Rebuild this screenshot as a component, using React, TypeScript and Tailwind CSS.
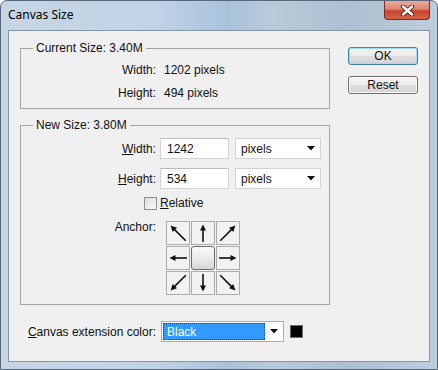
import React from 'react';

const FONT = "font-['Liberation_Sans',Arial,sans-serif]";

function Arrow({ angle }: { angle: number }) {
  const diag = angle % 90 !== 0;
  const tail = diag ? 22 : 20;
  const tip = diag ? 0.5 : 2.5;
  const base = tip + 6;
  return (
    <svg width="22" height="22" viewBox="0 0 22 22">
      <g transform={`rotate(${angle} 11 11)`}>
        <line x1="11" y1={tail} x2="11" y2={base - 1} stroke="#111" strokeWidth="1.6" />
        <polygon points={`11,${tip} 8,${base} 14,${base}`} fill="#111" />
      </g>
    </svg>
  );
}

function AnchorGrid() {
  const angles: (number | null)[] = [-45, 0, 45, -90, null, 90, -135, 180, 135];
  return (
    <div className="grid grid-cols-[24px_24px_24px] grid-rows-[24px_24px_24px] gap-[1px]">
      {angles.map((a, i) =>
        a === null ? (
          <div
            key={i}
            className="rounded-[3px] border border-[#6b6b6b] bg-[linear-gradient(to_bottom,#fbfbfb,#e9e9e9_55%,#d6d6d6)]"
          />
        ) : (
          <div key={i} className="flex items-center justify-center border border-[#ababab] bg-[#f2f2f2]">
            <Arrow angle={a} />
          </div>
        ),
      )}
    </div>
  );
}

function DropArrow() {
  return (
    <svg width="8" height="5" viewBox="0 0 8 5">
      <polygon points="0,0 8,0 4,4.5" fill="#111" />
    </svg>
  );
}

function UnitSelect() {
  return (
    <div className="ml-[6px] flex h-[21px] w-[86px] items-center justify-between border border-[#d3d3d3] bg-white pl-[5px] pr-[5px]">
      <span>pixels</span>
      <DropArrow />
    </div>
  );
}

export default function App() {
  return (
    <div className={`h-[370px] w-[438px] bg-white text-[12px] leading-[16px] text-[#111] ${FONT}`}>
      <div className="flex h-full w-full flex-col rounded-t-[7px] border border-[#56687b] bg-[linear-gradient(to_right,#c7d5e3,#c2d3e6_35%,#a9c2dc_52%,#b9cadb_62%,#aebfd1_80%,#bdcddd)] px-[7px] pb-[7px]">
        {/* title bar */}
        <div className="flex h-[29px] items-start justify-between">
          <span className="mt-[6px] font-['Noto_Sans',sans-serif] text-[12px] leading-[16px] text-black">
            Canvas Size
          </span>
          <div className="flex h-[19px] w-[46px] items-center justify-center rounded-b-[4px] border border-t-0 border-[#7a2a1e] bg-[linear-gradient(to_bottom,#e9a99b,#dd8571_45%,#c8432c_55%,#d4634b)]">
            <svg width="15" height="11" viewBox="0 0 15 11">
              <path d="M3 1.5 L12 9.5 M12 1.5 L3 9.5" stroke="#4a1d16" strokeWidth="4.2" strokeLinecap="round" />
              <path d="M3 1.5 L12 9.5 M12 1.5 L3 9.5" stroke="#fff" strokeWidth="2.4" strokeLinecap="round" />
            </svg>
          </div>
        </div>

        {/* client area */}
        <div className="flex flex-1 border border-[#8596a9] bg-[#f0f0f0]">
          <div className="ml-[11px] flex w-[310px] flex-col">
            <fieldset className="mt-[9px] border border-[#a6a6a6] pb-[7px] pt-[6px]">
              <legend className="ml-[12px] px-[3px] leading-[16px]">Current Size: 3.40M</legend>
              <div className="flex flex-col gap-[7px]">
                <div className="flex">
                  <span className="w-[135px] text-right">Width:</span>
                  <span className="ml-[8px]">1202 pixels</span>
                </div>
                <div className="flex">
                  <span className="w-[135px] text-right">Height:</span>
                  <span className="ml-[8px]">494 pixels</span>
                </div>
              </div>
            </fieldset>

            <fieldset className="mt-[8px] border border-[#a6a6a6] pb-[9px] pt-[5px]">
              <legend className="ml-[12px] px-[3px] leading-[16px]">New Size: 3.80M</legend>
              <div className="flex flex-col">
                <div className="flex items-center">
                  <span className="w-[135px] text-right">
                    <u>W</u>idth:
                  </span>
                  <div className="ml-[4px] flex h-[21px] w-[69px] items-center border border-[#d3d3d3] border-t-[#bcbcbc] bg-white pl-[6px]">
                    1242
                  </div>
                  <UnitSelect />
                </div>
                <div className="mt-[9px] flex items-center">
                  <span className="w-[135px] text-right">
                    <u>H</u>eight:
                  </span>
                  <div className="ml-[4px] flex h-[21px] w-[69px] items-center border border-[#d3d3d3] border-t-[#bcbcbc] bg-white pl-[6px]">
                    534
                  </div>
                  <UnitSelect />
                </div>
                <div className="mt-[6px] flex items-center pl-[123px]">
                  <div className="h-[13px] w-[13px] border border-[#8e8f8f] bg-[linear-gradient(to_bottom_right,#dcdcdc,#fbfbfb)]" />
                  <span className="ml-[3px]">
                    <u>R</u>elative
                  </span>
                </div>
                <div className="mt-[8px] flex items-start">
                  <span className="w-[135px] text-right">Anchor:</span>
                  <div className="ml-[10px] mt-[2px]">
                    <AnchorGrid />
                  </div>
                </div>
              </div>
            </fieldset>

            <div className="mt-[16px] flex items-center">
              <span className="w-[136px] text-right">
                <u>C</u>anvas extension color:
              </span>
              <div className="ml-[5px] flex h-[21px] w-[123px] items-center border border-[#8fb3d8] bg-white p-[1px]">
                <div className="flex h-full w-[102px] items-center border border-dotted border-[#4a3518] bg-[#3399ff] pl-[3px] text-white">
                  Black
                </div>
                <div className="flex flex-1 items-center justify-center">
                  <DropArrow />
                </div>
              </div>
              <div className="ml-[6px] h-[13px] w-[13px] border border-[#6a6a6a] bg-black" />
            </div>
          </div>

          <div className="ml-[18px] mt-[16px] flex w-[70px] flex-col gap-[11px]">
            <button className="flex h-[18px] items-center justify-center rounded-[3px] border border-[#3c7fb1] bg-[linear-gradient(to_bottom,#f4f4f4,#ececec_48%,#dfdfdf_52%,#d3d3d3)] shadow-[inset_0_0_0_1px_#9fdaf6]">
              OK
            </button>
            <button className="flex h-[18px] items-center justify-center rounded-[3px] border border-[#707070] bg-[linear-gradient(to_bottom,#f4f4f4,#ececec_48%,#dfdfdf_52%,#d3d3d3)] shadow-[inset_0_0_0_1px_#fcfcfc]">
              Reset
            </button>
          </div>
        </div>
      </div>
    </div>
  );
}
